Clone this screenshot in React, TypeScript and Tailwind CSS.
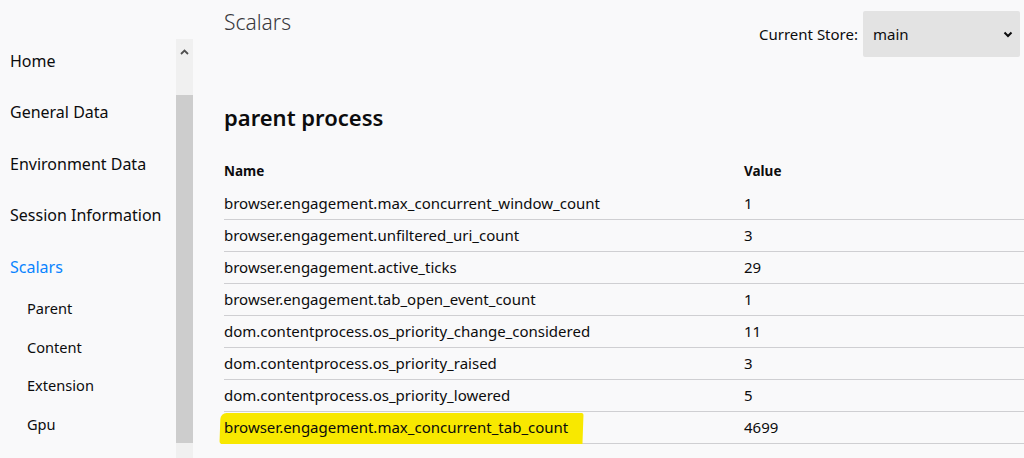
import { useState } from "react";

const sections = [
  { label: "Home" },
  { label: "General Data" },
  { label: "Environment Data" },
  { label: "Session Information" },
  { label: "Scalars", active: true },
];

const subSections = ["Parent", "Content", "Extension", "Gpu"];

const scalars: [string, string][] = [
  ["browser.engagement.max_concurrent_window_count", "1"],
  ["browser.engagement.unfiltered_uri_count", "3"],
  ["browser.engagement.active_ticks", "29"],
  ["browser.engagement.tab_open_event_count", "1"],
  ["dom.contentprocess.os_priority_change_considered", "11"],
  ["dom.contentprocess.os_priority_raised", "3"],
  ["dom.contentprocess.os_priority_lowered", "5"],
  ["browser.engagement.max_concurrent_tab_count", "4699"],
];

const Sidebar = () => {
  return (
    <div className="flex h-[458px] w-[193px] shrink-0">
      <div className="flex flex-col w-[176px] pt-[35px]">
        {sections.map((s) => (
          <div
            key={s.label}
            className={`flex items-center h-[51.5px] pl-[10px] text-[16px] whitespace-nowrap cursor-pointer ${
              s.active ? "text-[#0a84ff]" : "text-[#0c0c0d]"
            }`}
          >
            {s.label}
          </div>
        ))}
        <div className="flex flex-col mt-[-3px]">
          {subSections.map((s) => (
            <div
              key={s}
              className="flex items-center h-[38.7px] pl-[27px] text-[14.6px] text-[#0c0c0d] cursor-pointer"
            >
              {s}
            </div>
          ))}
        </div>
      </div>
      {/* scrollbar */}
      <div className="flex flex-col w-[17px] pt-[39px]">
        <div className="flex flex-col flex-1 bg-[#f0f0f0]">
          <div className="flex justify-center items-center h-[56px] pb-[30px]">
            <svg width="9" height="6" viewBox="0 0 9 6">
              <path d="M1 5 L4.5 1.5 L8 5" fill="none" stroke="#505050" strokeWidth="1.8" />
            </svg>
          </div>
          <div className="bg-[#cdcdcd] h-[348px]" />
        </div>
      </div>
    </div>
  );
};

const StoreSelect = () => {
  const [store, setStore] = useState("main");
  return (
    <div className="flex items-center gap-[5px] mt-[11px] mr-[4px]">
      <span className="text-[15px] text-[#0c0c0d]">Current Store:</span>
      <div className="relative w-[157px] h-[46px]">
        <select
          value={store}
          onChange={(e) => setStore(e.target.value)}
          className="appearance-none bg-[#e3e3e3] rounded-[2px] w-full h-full pl-[10px] text-[15px] text-[#0c0c0d] outline-none"
        >
          <option value="main">main</option>
          <option value="saved-session">saved-session</option>
        </select>
        <svg
          className="absolute right-[7px] top-[20px] pointer-events-none"
          width="10"
          height="7"
          viewBox="0 0 10 7"
        >
          <path d="M1.5 1.5 L5 5 L8.5 1.5" fill="none" stroke="#0c0c0d" strokeWidth="2" />
        </svg>
      </div>
    </div>
  );
};

export default function App() {
  return (
    <div
      className="flex w-[1024px] h-[458px] overflow-hidden bg-[#f9f9fa] text-[#0c0c0d]"
      style={{ fontFamily: '"Noto Sans", "Open Sans", sans-serif' }}
    >
      <Sidebar />
      <div className="flex flex-col flex-1 min-w-0 pl-[31px]">
        <div className="flex justify-between items-start h-[58px]">
          <h1 className="mt-[6px] text-[21px] font-light text-[#38383d] leading-[32px]">Scalars</h1>
          <StoreSelect />
        </div>
        <h2 className="mt-[42px] text-[22px] font-semibold leading-[34px]">parent process</h2>
        <table className="mt-[21px] w-[800px] border-collapse text-[15px]">
          <thead>
            <tr className="h-[32px]">
              <th className="w-[520px] text-left font-bold text-[13.5px]">Name</th>
              <th className="text-left font-bold text-[13.5px]">Value</th>
            </tr>
          </thead>
          <tbody>
            {scalars.map(([name, value], i) => {
              const highlighted = i === scalars.length - 1;
              return (
                <tr key={name} className="h-[32px] border-b-[1.5px] border-[#cfcfd2]">
                  <td className="relative p-0">
                    {highlighted && (
                      <span className="absolute left-[-4px] top-[1px] w-[363px] h-[31px] bg-[#f8e800] rounded-tl-[6px] rounded-bl-[3px] rounded-tr-[2px] -skew-x-2" />
                    )}
                    <span className="relative">{name}</span>
                  </td>
                  <td className="p-0">{value}</td>
                </tr>
              );
            })}
          </tbody>
        </table>
      </div>
    </div>
  );
}
